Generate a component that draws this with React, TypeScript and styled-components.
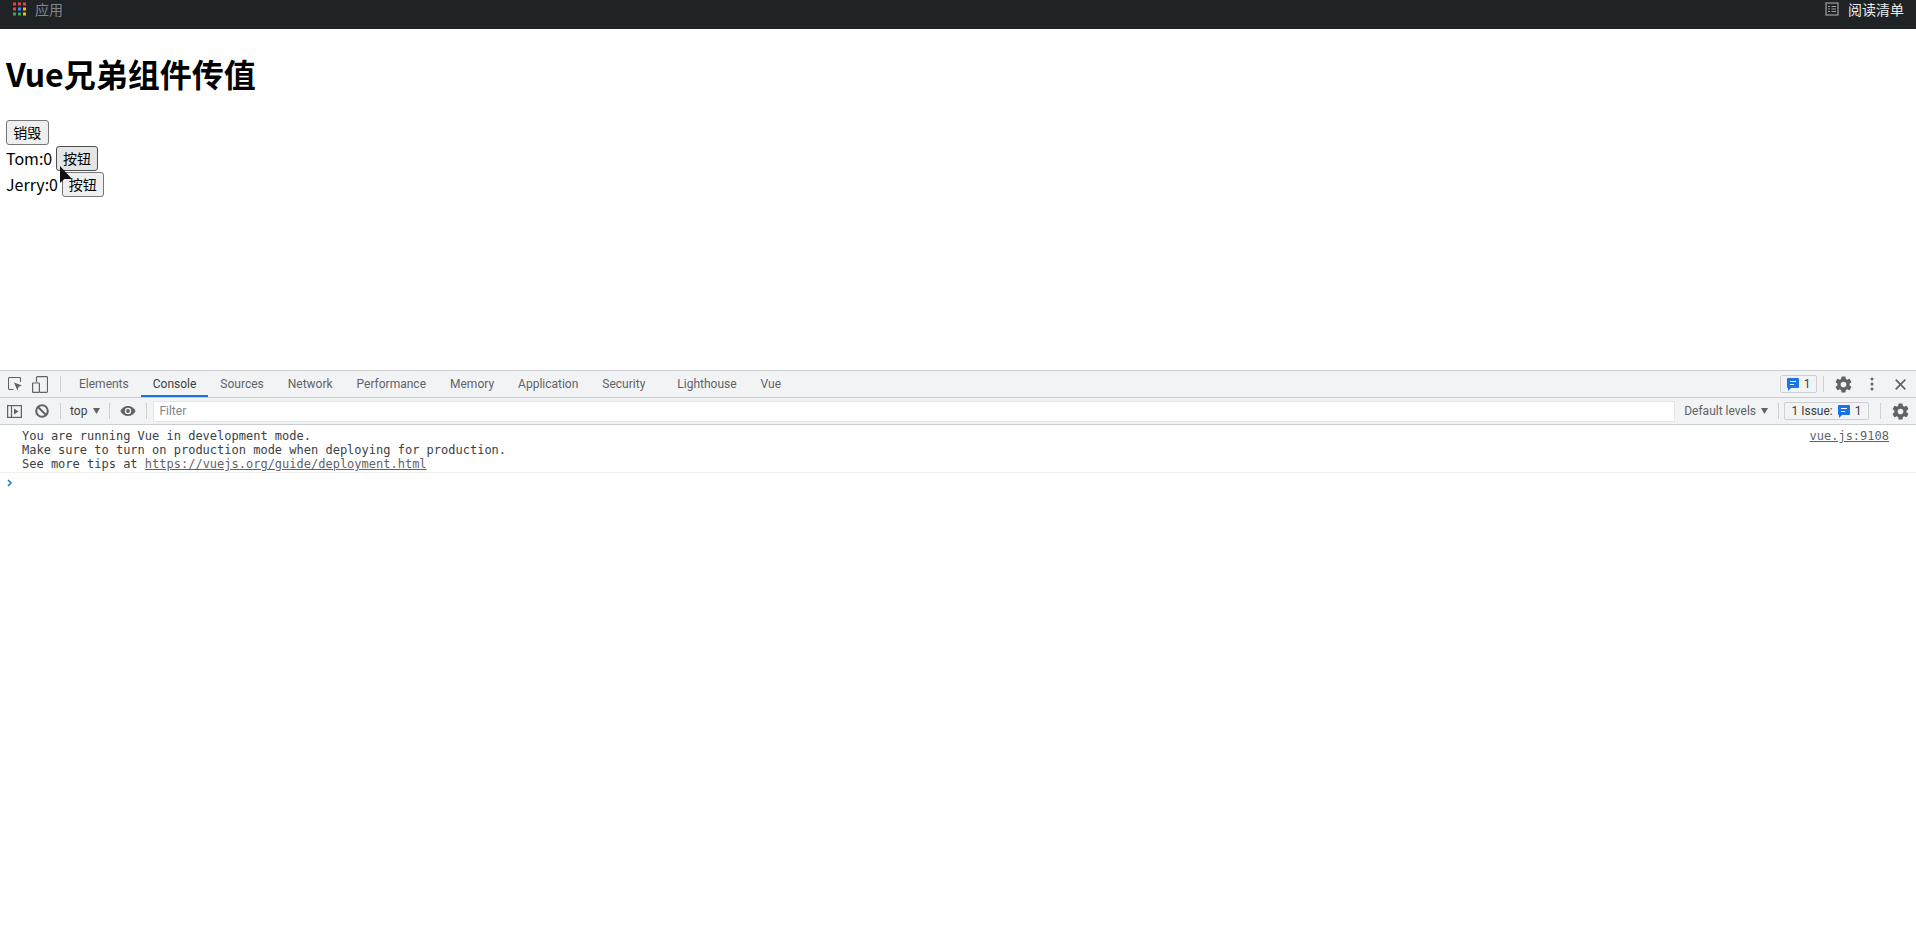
import React from 'react'
import styled, { createGlobalStyle } from 'styled-components'

const GlobalStyle = createGlobalStyle`
html, body {
  margin: 0;
  padding: 0;
  background: #fff;
}
`

const UI = `Roboto, "Noto Sans CJK SC", sans-serif`
const MONO = `"DejaVu Sans Mono", "Liberation Mono", monospace`

const tabs = ['Elements', 'Console', 'Sources', 'Network', 'Performance', 'Memory', 'Application', 'Security', 'Lighthouse', 'Vue']

const appColors = ['#ea4335', '#ea4335', '#ea4335', '#ea4335', '#4285f4', '#fbbc04', '#34a853', '#34a853', '#fbbc04']

const AppsIcon = () => (
  <svg width="13" height="14" viewBox="0 0 13 14">
    {appColors.map((color, i) => (
      <rect key={i} x={(i % 3) * 5} y={Math.floor(i / 3) * 5 + 0.5} width="3" height="3" fill={color} />
    ))}
  </svg>
)

const ReadingIcon = () => (
  <svg width="14" height="14" viewBox="0 0 14 14" fill="none" stroke="#9aa0a6" strokeWidth="1.2">
    <rect x="1" y="1" width="12" height="12" />
    <path d="M3 4.5h2M3 7h2M3 9.5h2M6.5 4.5h4.5M6.5 7h4.5M6.5 9.5h4.5" />
  </svg>
)

const InspectIcon = () => (
  <svg width="14" height="14" viewBox="0 0 14 14" fill="none">
    <path d="M5.500 12.500H1.500a1 1 0 0 1-1-1V1.500a1 1 0 0 1 1-1h10a1 1 0 0 1 1 1V5" stroke="#5f6368" strokeWidth="1.100" />
    <path d="M6 5.500l8 3-3.300 1.200L9.400 13.500z" fill="#5f6368" />
  </svg>
)

const DeviceIcon = () => (
  <svg width="16" height="17" viewBox="0 0 16 17" fill="none" stroke="#5f6368" strokeWidth="1.200">
    <path d="M4.500 6V1.600a1 1 0 0 1 1-1h9a1 1 0 0 1 1 1v13.800a1 1 0 0 1-1 1H8" />
    <rect x="0.600" y="7" width="6.800" height="9.400" rx="0.500" />
  </svg>
)

const SidebarIcon = () => (
  <svg width="15" height="13" viewBox="0 0 15 13" fill="none">
    <rect x="0.600" y="0.600" width="13.800" height="11.800" stroke="#5f6368" strokeWidth="1.200" />
    <path d="M4.500 0.600v11.800" stroke="#5f6368" strokeWidth="1.200" />
    <path d="M7 3.500l4.500 3-4.500 3z" fill="#5f6368" />
  </svg>
)

const BlockIcon = () => (
  <svg width="14" height="14" viewBox="0 0 14 14" fill="none" stroke="#5f6368" strokeWidth="2">
    <circle cx="7" cy="7" r="5.8" />
    <path d="M3 3l8 8" />
  </svg>
)

const EyeIcon = () => (
  <svg width="16" height="12" viewBox="0 0 16 12">
    <path fillRule="evenodd" fill="#5f6368" d="M8 1C4.500 1 1.600 3.100.4 6c1.200 2.900 4.100 5 7.600 5s6.400-2.100 7.600-5C14.400 3.100 11.500 1 8 1zm0 8.200A3.200 3.200 0 1 1 8 2.800a3.200 3.200 0 0 1 0 6.400zM8 4.100a1.900 1.900 0 1 0 0 3.800 1.900 1.900 0 0 0 0-3.800z" />
  </svg>
)

const GearIcon = () => (
  <svg width="17" height="17" viewBox="1.500 1.500 21 21">
    <path fill="#5f6368" d="M19.430 12.980c.04-.32.070-.64.070-.98s-.03-.66-.07-.98l2.110-1.650a.5.5 0 0 0 .12-.64l-2-3.460a.5.5 0 0 0-.61-.22l-2.490 1a7.300 7.300 0 0 0-1.690-.98l-.38-2.650A.49.49 0 0 0 14 2h-4a.49.49 0 0 0-.49.420l-.38 2.650c-.61.250-1.170.590-1.690.98l-2.490-1a.49.49 0 0 0-.61.220l-2 3.460a.49.49 0 0 0 .12.640l2.110 1.650c-.04.320-.07.650-.07.980s.03.660.07.980l-2.110 1.650a.5.5 0 0 0-.12.640l2 3.460c.12.220.39.300.61.220l2.490-1c.52.400 1.080.730 1.690.98l.38 2.650c.03.240.24.420.49.420h4c.25 0 .46-.18.49-.42l.38-2.650c.61-.25 1.170-.59 1.690-.98l2.490 1c.23.090.49 0 .61-.22l2-3.460a.5.5 0 0 0-.12-.64l-2.110-1.650zM12 15.500a3.500 3.500 0 1 1 0-7 3.500 3.500 0 0 1 0 7z" />
  </svg>
)

const MoreIcon = () => (
  <svg width="4" height="14" viewBox="0 0 4 14" fill="#5f6368">
    <circle cx="2" cy="2" r="1.5" />
    <circle cx="2" cy="7" r="1.5" />
    <circle cx="2" cy="12" r="1.5" />
  </svg>
)

const CloseIcon = () => (
  <svg width="11" height="11" viewBox="0 0 11 11" stroke="#5f6368" strokeWidth="1.7">
    <path d="M.7.7l9.600 9.600M10.300.7l-9.600 9.600" />
  </svg>
)

const IssueIcon = () => (
  <svg width="12" height="13" viewBox="0 0 12 13">
    <path fill="#1a73e8" d="M1 0h10a1 1 0 0 1 1 1v8a1 1 0 0 1-1 1H4l-3 3v-3a1 1 0 0 1-1-1V1a1 1 0 0 1 1-1z" />
    <path stroke="#fff" strokeWidth="1.200" d="M3 3.500h6M3 6.500h4" />
  </svg>
)

const Arrow = () => (
  <svg width="7" height="6" viewBox="0 0 7 6">
    <path fill="#5f6368" d="M0 0h7L3.500 6z" />
  </svg>
)

const Chevron = () => (
  <svg width="6" height="8" viewBox="0 0 6 8" fill="none" stroke="#1a73e8" strokeWidth="1.500">
    <path d="M1 1l3 3-3 3" />
  </svg>
)

const App = () => {
  return (
    <Page>
      <GlobalStyle />
      <BookmarkBar>
        <AppsLink>
          <AppsIcon />
          <span>应用</span>
        </AppsLink>
        <ReadingList>
          <ReadingIcon />
          <span>阅读清单</span>
        </ReadingList>
      </BookmarkBar>

      <Content>
        <Title>Vue兄弟组件传值</Title>
        <Row>
          <PageButton>销毁</PageButton>
        </Row>
        <Row>
          Tom:0 <PageButton $hover>按钮</PageButton>
        </Row>
        <Row>
          Jerry:0 <PageButton>按钮</PageButton>
        </Row>
        <Cursor width="14" height="20" viewBox="0 0 14 20">
          <path d="M0 0v17l4.500-4h7.500z" fill="#111" />
        </Cursor>
      </Content>

      <DevTools>
        <TabBar>
          <IconSlot $width={29}>
            <InspectIcon />
          </IconSlot>
          <IconSlot $width={21}>
            <DeviceIcon />
          </IconSlot>
          <Divider $margin="0 6px 0 10px" />
          {tabs.map((t) => (
            <Tab key={t} $active={t === 'Console'} $wide={t === 'Lighthouse'}>
              {t}
            </Tab>
          ))}
          <Spacer />
          <CountBadge>
            <IssueIcon />
            <span>1</span>
          </CountBadge>
          <Divider $margin="0 11px 0 6px" />
          <IconSlot $width={17}>
            <GearIcon />
          </IconSlot>
          <IconSlot $width={40}>
            <MoreIcon />
          </IconSlot>
          <IconSlot $width={17}>
            <CloseIcon />
          </IconSlot>
        </TabBar>
        <FilterBar>
          <IconSlot $width={28}>
            <SidebarIcon />
          </IconSlot>
          <IconSlot $width={28}>
            <BlockIcon />
          </IconSlot>
          <Divider $margin="0 9px 0 4px" />
          <ContextSelect>
            top <Arrow />
          </ContextSelect>
          <Divider $margin="0 8px 0 9px" />
          <IconSlot $width={20}>
            <EyeIcon />
          </IconSlot>
          <Divider $margin="0 6px 0 8px" />
          <FilterBox>Filter</FilterBox>
          <LevelSelect>
            Default levels <Arrow />
          </LevelSelect>
          <Divider $margin="0 5px 0 10px" />
          <IssueButton>
            <span>1 Issue:</span>
            <IssueIcon />
            <span>1</span>
          </IssueButton>
          <Divider $margin="0 11px 0 11px" />
          <GearIcon />
        </FilterBar>
        <ConsoleMessage>
          <pre>
            {'You are running Vue in development mode.\nMake sure to turn on production mode when deploying for production.\nSee more tips at '}
            <a>https://vuejs.org/guide/deployment.html</a>
          </pre>
          <SourceLink>vue.js:9108</SourceLink>
        </ConsoleMessage>
        <Prompt>
          <Chevron />
        </Prompt>
      </DevTools>
    </Page>
  )
}

export default App

const Page = styled.div`
display: flex;
flex-direction: column;
width: 1916px;
height: 943px;
overflow: hidden;
background: #fff;
`
const BookmarkBar = styled.div`
display: flex;
justify-content: space-between;
align-items: flex-start;
flex: none;
height: 29px;
background: #1f2326;
font-family: ${UI};
font-size: 14px;
`
const AppsLink = styled.div`
display: flex;
align-items: center;
gap: 9px;
height: 18px;
padding-left: 13px;
color: #80868b;
`
const ReadingList = styled.div`
display: flex;
align-items: center;
gap: 9px;
height: 18px;
padding-right: 12px;
color: #e8eaed;
`
const Content = styled.div`
position: relative;
flex: none;
height: 341px;
padding: 0 6px;
box-sizing: border-box;
font-family: "Noto Sans CJK SC", sans-serif;
font-size: 16px;
color: #000;
`
const Title = styled.h1`
margin: 0;
padding: 21px 0 23px;
font-size: 32px;
line-height: 47px;
font-weight: 700;
`
const Row = styled.div`
height: 26px;
line-height: 24px;
white-space: nowrap;
`
const PageButton = styled.button<{ $hover?: boolean }>`
box-sizing: border-box;
width: 42.5px;
height: 25px;
padding: 0;
font-family: "Noto Sans CJK SC", sans-serif;
font-size: 14px;
line-height: 21px;
color: #000;
background: ${(p) => (p.$hover ? '#e5e5e5' : '#efefef')};
border: 1px solid ${(p) => (p.$hover ? '#4f4f4f' : '#767676')};
border-radius: 3px;
vertical-align: top;
`
const Cursor = styled.svg`
position: absolute;
left: 60px;
top: 137px;
`
const DevTools = styled.div`
display: flex;
flex-direction: column;
flex: 1;
min-height: 0;
font-family: ${UI};
font-size: 12px;
color: #5f6368;
border-top: 1px solid #cbcdd1;
box-sizing: border-box;
`
const TabBar = styled.div`
display: flex;
align-items: center;
flex: none;
height: 26px;
padding-right: 7px;
background: #f1f3f4;
border-bottom: 1px solid #cbcdd1;
`
const FilterBar = styled.div`
display: flex;
align-items: center;
flex: none;
height: 26px;
padding: 0 7px 0 0;
background: #f1f3f4;
border-bottom: 1px solid #cbcdd1;
`
const IconSlot = styled.div<{ $width: number }>`
display: flex;
align-items: center;
justify-content: center;
flex: none;
width: ${(p) => p.$width}px;
`
const Divider = styled.div<{ $margin: string }>`
flex: none;
width: 1px;
height: 16px;
margin: ${(p) => p.$margin};
background: #cdcfd2;
`
const Tab = styled.div<{ $active?: boolean; $wide?: boolean }>`
display: flex;
align-items: center;
flex: none;
height: 26px;
box-sizing: border-box;
padding: ${(p) => (p.$active ? '2px 12px 0' : '0 12px')};
margin-left: ${(p) => (p.$wide ? '8px' : '0')};
color: ${(p) => (p.$active ? '#3c4043' : '#5f6368')};
border-bottom: ${(p) => (p.$active ? '2px solid #1a73e8' : '0')};
`
const Spacer = styled.div`
flex: 1;
`
const CountBadge = styled.div`
display: flex;
align-items: center;
justify-content: center;
gap: 5px;
box-sizing: border-box;
width: 37px;
height: 18px;
color: #3c4043;
border: 1px solid #cdcfd2;
border-radius: 2px;
`
const ContextSelect = styled.div`
display: flex;
align-items: center;
gap: 6px;
color: #3c4043;
`
const FilterBox = styled.div`
display: flex;
align-items: center;
flex: 1;
height: 21px;
padding-left: 5px;
background: #fff;
border: 1px solid #e4e6e8;
color: #80868b;
box-sizing: border-box;
`
const LevelSelect = styled.div`
display: flex;
align-items: center;
gap: 5px;
margin-left: 9px;
`
const IssueButton = styled.div`
display: flex;
align-items: center;
justify-content: center;
gap: 5px;
box-sizing: border-box;
width: 85px;
height: 18px;
color: #3c4043;
border: 1px solid #cdcfd2;
border-radius: 2px;
`
const ConsoleMessage = styled.div`
display: flex;
justify-content: space-between;
flex: none;
padding: 4px 27px 0 22px;
height: 48px;
box-sizing: border-box;
border-bottom: 1px solid #f0f0f0;
font-family: ${MONO};
font-size: 12px;
line-height: 14px;
color: #3c4043;
pre {
  margin: 0;
  font: inherit;
}
a {
  text-decoration: underline;
  color: #5f6368;
}
`
const SourceLink = styled.span`
text-decoration: underline;
color: #5f6368;
`
const Prompt = styled.div`
display: flex;
align-items: center;
height: 19px;
padding-left: 7px;
`
